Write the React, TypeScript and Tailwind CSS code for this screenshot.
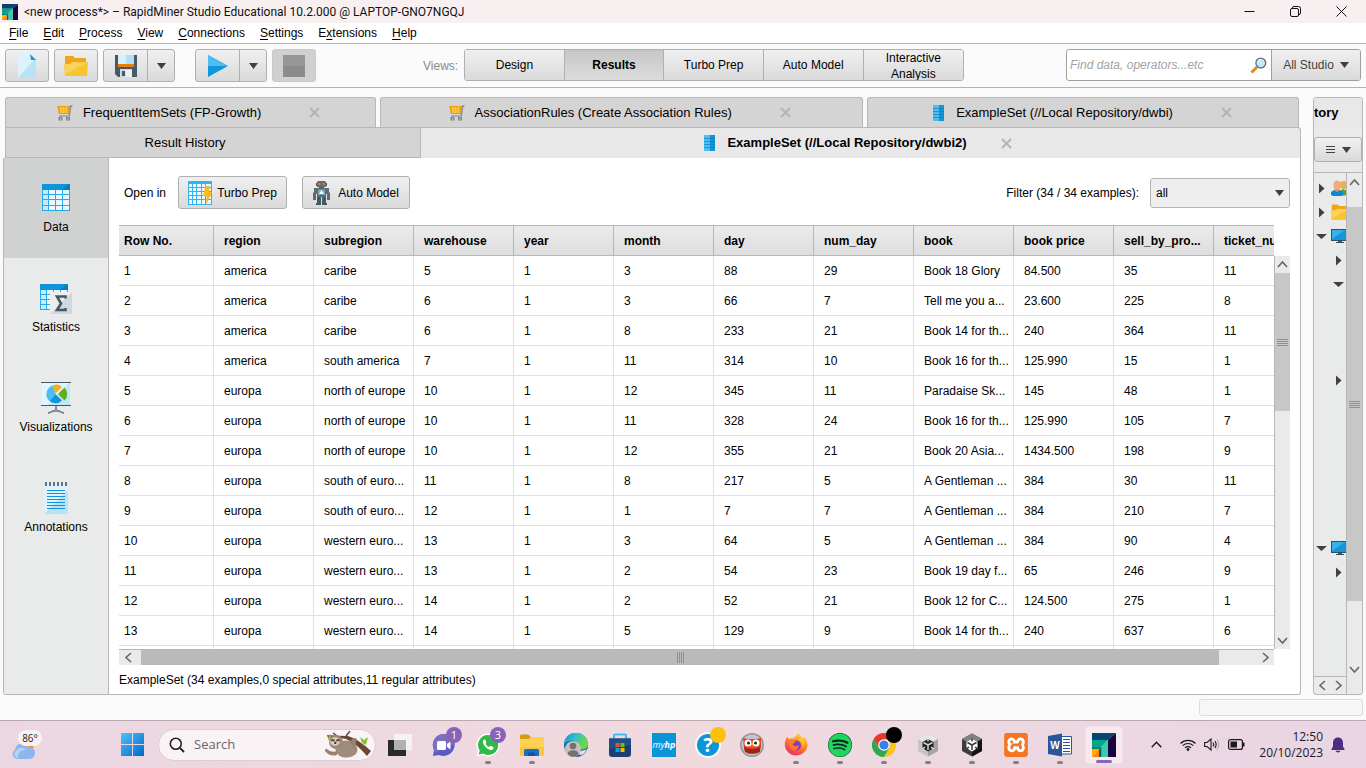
import React from "react";
import { FaWhatsapp, FaSpotify } from "react-icons/fa";
import { SiXampp } from "react-icons/si";

/* ---------- small shared pieces ---------- */

function Caret({ className = "" }: { className?: string }) {
  return (
    <svg width="9" height="6" viewBox="0 0 9 6" className={className} aria-hidden="true">
      <path d="M0 0H9L4.500 6Z" fill="#404040" />
    </svg>
  );
}

function Chevron({ dir }: { dir: "up" | "down" | "left" | "right" }) {
  const paths = {
    up: "M2 9L6.500 4L11 9",
    down: "M2 4L6.500 9L11 4",
    left: "M9 2L4 6.500L9 11",
    right: "M4 2L9 6.500L4 11",
  };
  return (
    <svg width="13" height="13" viewBox="0 0 13 13" aria-hidden="true">
      <path d={paths[dir]} fill="none" stroke="#666" strokeWidth="1.600" />
    </svg>
  );
}

function Grip({ vertical = false }: { vertical?: boolean }) {
  return (
    <svg width="11" height="11" viewBox="0 0 11 11" aria-hidden="true" className={vertical ? "rotate-90" : ""}>
      <path d="M0 2.500H11M0 4.500H11M0 6.500H11M0 8.500H11" stroke="#909090" />
    </svg>
  );
}

function CloseX({ className = "" }: { className?: string }) {
  return (
    <svg width="11" height="11" viewBox="0 0 11 11" className={className} aria-hidden="true">
      <path d="M1 1L10 10M10 1L1 10" stroke="#b3b3b3" strokeWidth="1.800" />
    </svg>
  );
}

/* ---------- application icons ---------- */

function RapidLogo({ size }: { size: number }) {
  return (
    <svg width={size} height={size} viewBox="0 0 24 24" aria-hidden="true">
      <path d="M0 0H24L16 7H0Z" fill="#06456f" />
      <path d="M24 0V24H16V7Z" fill="#16053f" />
      <path d="M0 7H16L9.500 14H0Z" fill="#00a890" />
      <path d="M16 7V24H9.500V14Z" fill="#3ccbaa" />
      <path d="M0 14H9.500L7 16.500H0Z" fill="#057b6f" />
      <path d="M9.500 14V24H7V16.500Z" fill="#04635e" />
      <path d="M0 16.500H7L0 24Z" fill="#ffb000" />
      <path d="M7 16.500V24H0Z" fill="#ff8400" />
    </svg>
  );
}

function NewFileIcon() {
  return (
    <svg width="18" height="24" viewBox="0 0 18 24" aria-hidden="true">
      <path d="M0 0H12L18 6V24H0Z" fill="#b8e2f8" />
      <path d="M0 0H12L16 6L0 24Z" fill="#dcf2fd" />
      <path d="M12 0L18 6H13Z" fill="#1296db" />
    </svg>
  );
}

function FolderIcon({ size }: { size: number }) {
  return (
    <svg width={size} height={size} viewBox="0 0 24 24" aria-hidden="true">
      <path d="M1 2H9L11 4H22V22H1Z" fill="#f2a516" />
      <path d="M0 10H6L8 8H24L23 22H1Z" fill="#f8c532" />
      <path d="M0 10H6L8 8H24L1.500 20Z" fill="#fad35b" />
    </svg>
  );
}

function SaveIcon() {
  return (
    <svg width="22" height="22" viewBox="0 0 22 22" aria-hidden="true">
      <path d="M0 0H22V22H3L0 19Z" fill="#455a64" />
      <path d="M3 0H19V9H3Z" fill="#d9f0fb" />
      <path d="M11 0H19V9H11Z" fill="#b3e0f7" />
      <path d="M3 9H19V12H3Z" fill="#e87f0c" />
      <path d="M5 14H17V22H5Z" fill="#cfd8dc" />
      <path d="M7 16H10V21H7Z" fill="#455a64" />
      <path d="M10 15H17V22H11Z" fill="#eceff1" />
    </svg>
  );
}

function PlayIcon() {
  return (
    <svg width="20" height="22" viewBox="0 0 20 22" aria-hidden="true">
      <path d="M0 0L20 11L0 22Z" fill="#1296db" />
      <path d="M0 0L20 11H0Z" fill="#4fbdf0" />
    </svg>
  );
}

function StopIcon() {
  return (
    <svg width="22" height="22" viewBox="0 0 22 22" aria-hidden="true">
      <path d="M0 0H22V22H0Z" fill="#8c8c8c" />
      <path d="M0 0H22V11H0Z" fill="#979797" />
    </svg>
  );
}

function MagnifierIcon() {
  return (
    <svg width="17" height="17" viewBox="0 0 17 17" aria-hidden="true">
      <path d="M1.500 15.500L7 10" stroke="#e8891b" strokeWidth="3" />
      <circle cx="10.800" cy="6" r="4.900" fill="#c3e8fb" stroke="#57707f" strokeWidth="1.300" />
      <path d="M7.500 6A3.500 3.500 0 0 1 11 2.500" stroke="#fff" fill="none" />
    </svg>
  );
}

function CartIcon() {
  return (
    <svg width="16" height="16" viewBox="0 0 16 16" aria-hidden="true">
      <path d="M0 1H13L12 9H2Z" fill="#efa00c" />
      <path d="M2 3H11M2.500 5H11M3 7H11M4 2V8M6.500 2V8M9 2V8" stroke="#fbdc8f" strokeWidth=".6" />
      <path d="M15.500 .8H13.700L12.300 11H2" fill="none" stroke="#78888f" strokeWidth="1.200" />
      <path d="M1.500 12H5.500V15.500H1.500ZM9 12H13V15.500H9Z" fill="#78888f" />
      <path d="M3 13.200H4.200V14.400H3ZM10.400 13.200H11.600V14.400H10.400Z" fill="#dfe4e6" />
    </svg>
  );
}

function ExampleSetIcon() {
  return (
    <svg width="16" height="16" viewBox="0 0 16 16" aria-hidden="true">
      <path d="M3 0H9V16H3Z" fill="#4fbdf0" />
      <path d="M9 0H14V16H9Z" fill="#1296db" />
      <path d="M3 3.500H9M3 6.500H9M3 9.500H9M3 12.500H9" stroke="#1a86c4" strokeWidth=".8" />
      <path d="M9 3.500H14M9 6.500H14M9 9.500H14M9 12.500H14" stroke="#0b78b6" strokeWidth=".6" />
    </svg>
  );
}

function DataIcon() {
  return (
    <svg width="32" height="32" viewBox="0 0 32 32" aria-hidden="true">
      <path d="M2 2H30V29H2Z" fill="#29a9e6" />
      <path d="M2 2H30V8H2Z" fill="#0f94d9" />
      <path d="M28 2H30V8H22Z" fill="#0a7dbf" />
      <path d="M3 8H8V12H3ZM3 13H8V17H3ZM3 18H8V23H3ZM3 24H8V28H3Z" fill="#c6eafb" />
      <path d="M9 8H15V12H9ZM16 8H22V12H16ZM23 8H29V12H23ZM9 13H15V17H9ZM16 13H22V17H16ZM23 13H29V17H23ZM9 18H15V23H9ZM16 18H22V23H16ZM23 18H29V23H23ZM9 24H15V28H9ZM16 24H22V28H16ZM23 24H29V28H23Z" fill="#e9f7fe" />
    </svg>
  );
}

function StatisticsIcon() {
  return (
    <svg width="32" height="32" viewBox="0 0 32 32" aria-hidden="true">
      <path d="M0 2H28V28H0Z" fill="#29a9e6" />
      <path d="M0 2H28V8H0Z" fill="#0f94d9" />
      <path d="M27 2H28V8H20Z" fill="#0a7dbf" />
      <path d="M1 8H6V12H1ZM1 13H6V17H1ZM1 18H6V22H1ZM1 23H6V27H1Z" fill="#c6eafb" />
      <path d="M7 8H13V12H7ZM14 8H20V12H14ZM21 8H27V12H21ZM7 13H13V17H7ZM7 18H13V22H7ZM7 23H13V27H7Z" fill="#e9f7fe" />
      <path d="M10 10H32V32H10Z" fill="#eceff0" />
      <path d="M32 10V32H10Z" fill="#cfd8dc" />
      <path d="M25.500 16.500V14.500H17L21 21.500L17 28H25.500V26" fill="none" stroke="#455a64" strokeWidth="2.600" />
    </svg>
  );
}

function VisualizationsIcon() {
  return (
    <svg width="32" height="32" viewBox="0 0 32 32" aria-hidden="true">
      <path d="M2 1H30V23H2Z" fill="#bfe6f9" />
      <path d="M2 1H29L8 23H2Z" fill="#e2f4fd" />
      <path d="M1 0H31V1H1ZM1 23H31V24H1Z" fill="#455a64" />
      <path d="M15.500 12L13 3.500A9 9 0 0 0 9.500 19Z" fill="#4fbdf0" />
      <path d="M15.500 12L9.500 19A9 9 0 0 0 22 18.500Z" fill="#1296db" />
      <path d="M15.500 11.500L13 3.200A9 9 0 0 1 22 5Z" fill="#f8ae12" />
      <path d="M18 12L24.500 5.500A9 9 0 0 1 24.500 18.500Z" fill="#61ad1f" />
      <path d="M16 24V28M8 31C11 31 11 29 16 28.500C21 29 21 31 24 31" fill="none" stroke="#78888f" strokeWidth="1.800" />
    </svg>
  );
}

function AnnotationsIcon() {
  return (
    <svg width="32" height="32" viewBox="0 0 32 32" aria-hidden="true">
      <path d="M4 2H28V32H4Z" fill="#b8e2f8" />
      <path d="M4 2H28V8L4 32Z" fill="#dcf2fd" />
      <path d="M6 0V4M10 0V4M14 0V4M18 0V4M22 0V4M26 0V4" stroke="#61737c" strokeWidth="2" />
      <path d="M7 8.500H25M7 11.500H25M7 14.500H25M7 17.500H25M7 20.500H25M7 23.500H25M7 26.500H25" stroke="#1592d4" />
    </svg>
  );
}

function TurboPrepIcon() {
  return (
    <svg width="24" height="24" viewBox="0 0 24 24" aria-hidden="true">
      <path d="M0 0H24V24H0Z" fill="#35b3ef" />
      <path d="M1 3H4V6H1ZM5 3H8V6H5ZM9 3H13V6H9ZM14 3H17V6H14ZM18 3H23V6H18Z M1 7H4V10H1ZM5 7H8V10H5ZM9 7H13V10H9ZM14 7H17V10H14ZM18 7H23V10H18Z M1 11H4V14H1ZM5 11H8V14H5ZM9 11H13V14H9ZM14 11H17V14H14ZM18 11H23V14H18Z M1 15H4V18H1ZM5 15H8V18H5ZM9 15H13V18H9ZM14 15H17V18H14ZM18 15H23V18H18Z M1 19H4V23H1ZM5 19H8V23H5ZM9 19H13V23H9ZM14 19H17V23H14ZM18 19H23V23H18Z" fill="#eaf8ff" />
      <path d="M17.500 5H22L21 11H24L18 24L18.500 15H15Z" fill="#fbbc1a" />
    </svg>
  );
}

function RobotIcon() {
  return (
    <svg width="17" height="24" viewBox="0 0 17 24" aria-hidden="true">
      <path d="M5 0H12L13 1V6H4V1Z" fill="#5b6e78" />
      <path d="M3 2H4V5H3ZM13 2H14V5H13ZM6 6H11V8H6Z" fill="#455a64" />
      <path d="M1 7H16V11L17 12V19H14V13H13V16H4V13H3V19H0V12L1 11Z" fill="#5b6e78" />
      <path d="M4 16H8V24H3V22H4ZM9 16H13V22H14V24H9Z" fill="#455a64" />
      <circle cx="6.300" cy="3" r="1.300" fill="#ef6c3a" />
      <circle cx="10.700" cy="3" r="1.300" fill="#ef6c3a" />
      <path d="M5 8.500H12V14H5Z" fill="#8fa3ad" />
      <path d="M8.500 9L11 13H6Z" fill="#fff" />
      <path d="M7 13H10V14H7Z" fill="#3aa9e0" />
    </svg>
  );
}

function MonitorIcon() {
  return (
    <svg width="18" height="16" viewBox="0 0 18 16" aria-hidden="true">
      <path d="M0 1H18V13H0Z" fill="#37505e" />
      <path d="M1 2H17V12H1Z" fill="#1296db" />
      <path d="M1 2H14L1 11Z" fill="#38b0ea" />
      <path d="M7 13H11V14H13V15H5V14H7Z" fill="#37505e" />
    </svg>
  );
}

function PeopleIcon() {
  return (
    <svg width="18" height="16" viewBox="0 0 18 16" aria-hidden="true">
      <path d="M8 16V12L12 9L18 12V15Z" fill="#5f9a2c" />
      <circle cx="12.500" cy="5" r="4" fill="#e9b04e" />
      <path d="M0 15V12L4 9.500H8L12 12V15L10 16H2Z" fill="#0f86d0" />
      <path d="M4 8H8V11L6 12L4 11Z" fill="#e2945b" />
      <ellipse cx="6" cy="5" rx="3.600" ry="4.500" fill="#f2ab79" />
    </svg>
  );
}

/* ---------- top bars ---------- */

function TitleBar() {
  return (
    <header className="flex h-[23px] shrink-0 items-center bg-[#f8eff1] pl-[2px] pr-[2px]">
      <RapidLogo size={16} />
      <h1 className="ml-[6px] flex-1 whitespace-nowrap font-['Roboto','Noto_Sans',sans-serif] text-[12px] leading-[20px] text-[#111]">
        {"<new process*> – RapidMiner Studio Educational 10.2.000 @ LAPTOP-GNO7NGQJ"}
      </h1>
      <button aria-label="Minimize" className="flex h-[20px] w-[46px] items-center justify-center">
        <svg width="11" height="11" viewBox="0 0 11 11"><path d="M.5 5.500H10.500" stroke="#111" /></svg>
      </button>
      <button aria-label="Restore" className="flex h-[20px] w-[46px] items-center justify-center">
        <svg width="11" height="11" viewBox="0 0 11 11" fill="none" stroke="#111">
          <rect x=".5" y="2.500" width="8" height="8" rx="1.500" />
          <path d="M2.500 2.500V2A1.500 1.500 0 0 1 4 .5H8.500A2 2 0 0 1 10.500 2.500V7A1.500 1.500 0 0 1 9 8.500" />
        </svg>
      </button>
      <button aria-label="Close" className="flex h-[20px] w-[46px] items-center justify-center">
        <svg width="11" height="11" viewBox="0 0 11 11"><path d="M.5 .5L10.500 10.500M10.500 .5L.5 10.500" stroke="#111" /></svg>
      </button>
    </header>
  );
}

const menus: [string, string, string][] = [
  ["", "F", "ile"],
  ["", "E", "dit"],
  ["", "P", "rocess"],
  ["", "V", "iew"],
  ["", "C", "onnections"],
  ["", "S", "ettings"],
  ["E", "x", "tensions"],
  ["", "H", "elp"],
];

function MenuBar() {
  return (
    <nav aria-label="Main menu" className="flex h-[21px] shrink-0 items-center gap-[15px] border-b border-[#b4b4b4] bg-white pl-[9px] text-black">
      {menus.map(([a, key, b]) => (
        <button key={a + key + b} className="leading-[18px]">
          {a}
          <span className="underline underline-offset-2">{key}</span>
          {b}
        </button>
      ))}
    </nav>
  );
}

function ToolButton({ label, children }: { label: string; children: React.ReactNode }) {
  return (
    <button aria-label={label} className="flex h-[33px] w-[44px] items-center justify-center rounded-[3px] border border-[#b0b0b0] bg-linear-to-b from-[#f0f0f0] to-[#dadada]">
      {children}
    </button>
  );
}

function SplitButton({ label, children }: { label: string; children: React.ReactNode }) {
  return (
    <div className="flex h-[33px] w-[72px] rounded-[3px] border border-[#b0b0b0] bg-linear-to-b from-[#f0f0f0] to-[#dadada]">
      <button aria-label={label} className="flex flex-1 items-center justify-center">
        {children}
      </button>
      <button aria-label={label + " options"} className="flex w-[27px] items-center justify-center border-l border-[#b0b0b0]">
        <Caret />
      </button>
    </div>
  );
}

const views = ["Design", "Results", "Turbo Prep", "Auto Model", "Interactive Analysis"];

function Toolbar() {
  return (
    <div className="flex h-[44px] shrink-0 items-start border-b border-[#b4b4b4] px-[5px] pt-[5px]">
      <div className="flex gap-[5px]">
        <ToolButton label="New process"><NewFileIcon /></ToolButton>
        <ToolButton label="Open process"><FolderIcon size={24} /></ToolButton>
        <SplitButton label="Save process"><SaveIcon /></SplitButton>
      </div>
      <div className="ml-5 flex gap-[5px]">
        <SplitButton label="Run process"><PlayIcon /></SplitButton>
        <button disabled aria-label="Stop process" className="flex h-[33px] w-[44px] items-center justify-center rounded-[3px] border border-[#cacaca] bg-[#d0d0d0]">
          <StopIcon />
        </button>
      </div>
      <span className="ml-[107px] mr-[6px] leading-[34px] text-[#8a8a8a]">Views:</span>
      <div className="flex h-[32px] w-[500px] overflow-hidden rounded-[3px] border border-[#b0b0b0]">
        {views.map((v, i) => (
          <button
            key={v}
            aria-pressed={i === 1}
            className={
              i === 1
                ? "w-1/5 border-r border-[#b0b0b0] bg-linear-to-b from-[#c6c6c6] to-[#dcdcdc] px-4 font-bold leading-[16px]"
                : "w-1/5 border-r border-[#b0b0b0] bg-linear-to-b from-[#f0f0f0] to-[#dadada] px-4 leading-[16px] last:border-r-0"
            }
          >
            {v}
          </button>
        ))}
      </div>
      <form role="search" className="ml-auto flex h-[32px] w-[295px] overflow-hidden rounded-[3px] border border-[#a0a0a0] bg-white">
        <input
          type="search"
          aria-label="Find data, operators"
          placeholder="Find data, operators...etc"
          className="min-w-0 flex-1 pl-[3px] text-[12px] italic outline-none placeholder:text-[#a3a3a3]"
        />
        <button type="button" aria-label="Search" className="mr-[4px] flex items-center">
          <MagnifierIcon />
        </button>
        <button type="button" className="flex w-[89px] items-center justify-center gap-[6px] border-l border-[#a0a0a0] bg-linear-to-b from-[#f0f0f0] to-[#dadada] text-[#444]">
          All Studio <Caret />
        </button>
      </form>
    </div>
  );
}

/* ---------- result tabs ---------- */

function Tab({ icon, title, grow }: { icon: React.ReactNode; title: string; grow: string }) {
  return (
    <div className={grow + " flex items-center justify-center rounded-t-[3px] border border-b-0 border-[#b7b7b7] bg-[#d4d4d4]"}>
      <button role="tab" aria-selected="false" className="flex items-center gap-[10px] whitespace-nowrap">
        {icon}
        {title}
      </button>
      <button aria-label={"Close " + title} className="ml-[48px] mr-1">
        <CloseX />
      </button>
    </div>
  );
}

function Tabs() {
  return (
    <div role="tablist" className="pl-[2px] text-[13px]">
      <div className="flex h-[30px] gap-[4px] pr-[2px]">
        <Tab grow="flex-[371]" icon={<CartIcon />} title="FrequentItemSets (FP-Growth)" />
        <Tab grow="flex-[483]" icon={<CartIcon />} title="AssociationRules (Create Association Rules)" />
        <Tab grow="flex-[432]" icon={<ExampleSetIcon />} title="ExampleSet (//Local Repository/dwbi)" />
      </div>
      <div className="flex h-[31px]">
        <button role="tab" aria-selected="false" className="flex-[415] border border-r-0 border-[#b7b7b7] bg-[#d4d4d4]">
          <span className="pr-14">Result History</span>
        </button>
        <div className="flex flex-[881] items-center justify-center rounded-tr-[3px] border border-b-0 border-[#b7b7b7] bg-[#e8e8e8]">
          <button role="tab" aria-selected="true" className="flex items-center gap-[10px] whitespace-nowrap font-bold">
            <ExampleSetIcon />
            ExampleSet (//Local Repository/dwbi2)
          </button>
          <button aria-label="Close ExampleSet" className="ml-[34px] mr-2">
            <CloseX />
          </button>
        </div>
      </div>
    </div>
  );
}

/* ---------- data view ---------- */

const sideItems = [
  { label: "Data", icon: <DataIcon /> },
  { label: "Statistics", icon: <StatisticsIcon /> },
  { label: "Visualizations", icon: <VisualizationsIcon /> },
  { label: "Annotations", icon: <AnnotationsIcon /> },
];

function SideNav() {
  return (
    <nav aria-label="Result views" className="w-[105px] shrink-0 border-r border-[#b7b7b7] bg-[#e8ebea]">
      {sideItems.map((s, i) => (
        <button
          key={s.label}
          aria-pressed={i === 0}
          className={
            i === 0
              ? "flex h-[100px] w-full flex-col items-center bg-[#d0d2d1] pt-6"
              : "flex h-[100px] w-full flex-col items-center pt-6"
          }
        >
          {s.icon}
          <span className="mt-[5px] leading-[16px]">{s.label}</span>
        </button>
      ))}
    </nav>
  );
}

const columns = ["Row No.", "region", "subregion", "warehouse", "year", "month", "day", "num_day", "book", "book price", "sell_by_pro...", "ticket_nu"];

const rows: string[][] = [
  ["1", "america", "caribe", "5", "1", "3", "88", "29", "Book 18 Glory", "84.500", "35", "11"],
  ["2", "america", "caribe", "6", "1", "3", "66", "7", "Tell me you a...", "23.600", "225", "8"],
  ["3", "america", "caribe", "6", "1", "8", "233", "21", "Book 14 for th...", "240", "364", "11"],
  ["4", "america", "south america", "7", "1", "11", "314", "10", "Book 16 for th...", "125.990", "15", "1"],
  ["5", "europa", "north of europe", "10", "1", "12", "345", "11", "Paradaise Sk...", "145", "48", "1"],
  ["6", "europa", "north of europe", "10", "1", "11", "328", "24", "Book 16 for th...", "125.990", "105", "7"],
  ["7", "europa", "north of europe", "10", "1", "12", "355", "21", "Book 20 Asia...", "1434.500", "198", "9"],
  ["8", "europa", "south of euro...", "11", "1", "8", "217", "5", "A Gentleman ...", "384", "30", "11"],
  ["9", "europa", "south of euro...", "12", "1", "1", "7", "7", "A Gentleman ...", "384", "210", "7"],
  ["10", "europa", "western euro...", "13", "1", "3", "64", "5", "A Gentleman ...", "384", "90", "4"],
  ["11", "europa", "western euro...", "13", "1", "2", "54", "23", "Book 19 day f...", "65", "246", "9"],
  ["12", "europa", "western euro...", "14", "1", "2", "52", "21", "Book 12 for C...", "124.500", "275", "1"],
  ["13", "europa", "western euro...", "14", "1", "5", "129", "9", "Book 14 for th...", "240", "637", "6"],
  ["", "", "", "", "", "", "", "", "", "", "", ""],
];

function DataTable() {
  return (
    <table className="w-full min-w-[1195px] table-fixed border-separate border-spacing-0 text-left">
      <colgroup>
        <col className="w-[95px]" />
        {columns.slice(1).map((c) => (
          <col key={c} className="w-[100px]" />
        ))}
      </colgroup>
      <thead>
        <tr>
          {columns.map((c) => (
            <th key={c} scope="col" className="h-[31px] whitespace-nowrap border-y border-r border-[#b7b7b7] bg-linear-to-b from-[#ebebeb] to-[#dedede] p-0 pl-[10px] font-bold first:pl-[5px]">
              {c}
            </th>
          ))}
        </tr>
      </thead>
      <tbody>
        {rows.map((r, i) => (
          <tr key={i}>
            {r.map((v, j) => (
              <td key={j} className="h-[30px] whitespace-nowrap border-b border-r border-[#e0e0e0] p-0 pl-[10px] first:pl-[5px]">
                {v}
              </td>
            ))}
          </tr>
        ))}
      </tbody>
    </table>
  );
}

function DataView() {
  return (
    <section className="flex min-w-0 flex-1 flex-col px-[10px] pt-[18px]">
      <div className="flex h-[33px] shrink-0 items-center pl-[5px]">
        <span className="mr-3">Open in</span>
        <button className="flex h-full w-[109px] items-center justify-center gap-[5px] rounded-[3px] border border-[#b0b0b0] bg-linear-to-b from-[#f0f0f0] to-[#dadada]">
          <TurboPrepIcon />
          Turbo Prep
        </button>
        <button className="ml-[15px] flex h-full w-[108px] items-center justify-center gap-[8px] rounded-[3px] border border-[#b0b0b0] bg-linear-to-b from-[#f0f0f0] to-[#dadada]">
          <RobotIcon />
          Auto Model
        </button>
        <label htmlFor="filter" className="ml-auto mr-[11px]">
          Filter (34 / 34 examples):
        </label>
        <div className="relative">
          <select id="filter" className="h-[30px] w-[140px] appearance-none rounded-[3px] border border-[#b4b4b4] bg-[#eeeeee] pl-[5px] outline-none">
            <option>all</option>
          </select>
          <Caret className="pointer-events-none absolute right-[6px] top-3" />
        </div>
      </div>
      <div className="mt-4 flex min-h-0 flex-1">
        <div className="min-w-0 flex-1 overflow-hidden">
          <DataTable />
        </div>
        <div className="mt-[31px] flex w-[16px] flex-col items-center border-l border-[#b7b7b7] bg-[#e8ebea]">
          <button aria-label="Scroll up" className="flex h-[17px] items-center"><Chevron dir="up" /></button>
          <div className="flex h-[138px] w-full items-center justify-center bg-[#c6c7c6]"><Grip /></div>
          <button aria-label="Scroll down" className="mt-auto flex h-[17px] items-center"><Chevron dir="down" /></button>
        </div>
      </div>
      <div className="mr-[16px] flex h-[16px] shrink-0 items-center border-t border-[#b7b7b7] bg-[#e8ebea]">
        <button aria-label="Scroll left" className="flex w-[22px] justify-center pr-1"><Chevron dir="left" /></button>
        <div className="flex h-full flex-1 items-center justify-center bg-[#bababa]"><Grip vertical /></div>
        <button aria-label="Scroll right" className="flex w-[55px] justify-end pr-[2px]"><Chevron dir="right" /></button>
      </div>
      <p className="flex h-[29px] shrink-0 items-center">ExampleSet (34 examples,0 special attributes,11 regular attributes)</p>
    </section>
  );
}

/* ---------- repository panel ---------- */

type Node = { level: number; open: boolean; icon?: React.ReactNode } | null;

const tree: Node[] = [
  { level: 0, open: false, icon: <PeopleIcon /> },
  { level: 0, open: false, icon: <FolderIcon size={18} /> },
  { level: 0, open: true, icon: <MonitorIcon /> },
  { level: 1, open: false },
  { level: 1, open: true },
  null,
  null,
  null,
  { level: 1, open: false },
  null,
  null,
  null,
  null,
  null,
  null,
  { level: 0, open: true, icon: <MonitorIcon /> },
  { level: 1, open: false },
];

function RepositoryPanel() {
  return (
    <aside className="flex w-[50px] shrink-0 flex-col overflow-hidden rounded-[3px] border border-[#b7b7b7] bg-[#e8ebea]">
      <h2 className="flex h-[30px] shrink-0 items-center bg-[#e8e8e8] text-[13px] font-bold">tory</h2>
      <button aria-label="Repository menu" className="mt-[9px] flex h-[25px] shrink-0 items-center justify-center gap-[7px] rounded-[3px] border border-[#b0b0b0] bg-linear-to-b from-[#f0f0f0] to-[#dadada]">
        <svg width="9" height="8" viewBox="0 0 9 8" aria-hidden="true"><path d="M0 .5H9M0 3.500H9M0 6.500H9" stroke="#404040" /></svg>
        <Caret />
      </button>
      <div className="mt-[10px] flex min-h-0 flex-1 border-t border-[#b7b7b7]">
        <div className="flex min-w-0 flex-1 flex-col">
          <ul className="min-h-0 flex-1 overflow-hidden border-b border-[#b7b7b7] pt-[3px]">
            {tree.map((n, i) => (
              <li key={i} className={n && n.level === 1 ? "flex h-6 items-center pl-[19px]" : "flex h-6 items-center pl-[2px]"}>
                {n && (
                  <svg width="11" height="11" viewBox="0 0 11 11" className="mr-[4px] shrink-0" aria-hidden="true">
                    <path d={n.open ? "M0 3H11L5.500 8Z" : "M3 .5V10.500L8.500 5.500Z"} fill="#404040" />
                  </svg>
                )}
                {n && n.icon && <span className="shrink-0">{n.icon}</span>}
              </li>
            ))}
          </ul>
          <div className="flex h-[17px] shrink-0 items-center gap-[3px] pl-[2px]">
            <Chevron dir="left" />
            <Chevron dir="right" />
          </div>
        </div>
        <div className="flex w-[16px] flex-col items-center border-l border-[#b7b7b7] pb-[18px]">
          <div className="flex h-[34px] pt-[3px]"><Chevron dir="up" /></div>
          <div className="flex w-full flex-1 items-center justify-center bg-[#c6c7c6]"><Grip /></div>
          <div className="flex h-[75px] items-end"><Chevron dir="down" /></div>
        </div>
      </div>
    </aside>
  );
}

/* ---------- desktop taskbar ---------- */

function StoreIcon() {
  return (
    <svg width="24" height="24" viewBox="0 0 24 24" aria-hidden="true">
      <path d="M6 6V2.500Q6 1.500 7 1.500H17Q18 1.500 18 2.500V6" fill="none" stroke="#35bff5" strokeWidth="2" />
      <path d="M1 5.500H23V21Q23 24 20 24H4Q1 24 1 21Z" fill="#1c3f72" />
      <path d="M1 5.500H23V12L1 16Z" fill="#1f4f88" />
      <path d="M7.500 10H11.500V14H7.500Z" fill="#f25022" />
      <path d="M12.500 10H16.500V14H12.500Z" fill="#7fba00" />
      <path d="M7.500 15H11.500V19H7.500Z" fill="#00a4ef" />
      <path d="M12.500 15H16.500V19H12.500Z" fill="#ffb900" />
    </svg>
  );
}

function EdgeIcon() {
  return (
    <svg width="24" height="24" viewBox="0 0 24 24" aria-hidden="true">
      <defs>
        <linearGradient id="edge" x1="0" y1="0" x2="1" y2=".4">
          <stop offset="0" stopColor="#1a90dc" />
          <stop offset=".5" stopColor="#2cc3cf" />
          <stop offset="1" stopColor="#6fd93b" />
        </linearGradient>
      </defs>
      <circle cx="12" cy="12" r="12" fill="#0f5ba8" />
      <path d="M0 12A12 12 0 0 1 24 11C24 15 21 16.500 18 16.500Q13 16 14 13Q12 6 5 8Q1 9 0 12Z" fill="url(#edge)" />
      <path d="M14 17Q18 19 23 16Q21 21 16 22.500Z" fill="#f1dade" />
      <circle cx="9" cy="16" r="8" fill="#c4c1bf" />
      <circle cx="9" cy="13" r="3.300" fill="#77716e" />
      <path d="M3.500 21Q4 17.300 9 17.300T14.500 21Q12 24 9 24T3.500 21Z" fill="#77716e" />
    </svg>
  );
}

function FirefoxIcon() {
  return (
    <svg width="24" height="24" viewBox="0 0 24 24" aria-hidden="true">
      <defs>
        <linearGradient id="fox" x1=".8" y1="0" x2=".3" y2="1">
          <stop offset="0" stopColor="#ffe03a" />
          <stop offset=".45" stopColor="#ff8a1e" />
          <stop offset="1" stopColor="#f0266f" />
        </linearGradient>
      </defs>
      <path d="M14.500 0Q16 3 19 5.500Q20 4.500 19.800 3.500Q24 8 23.500 13.500A11.500 11 0 0 1 1 14Q0 9 3 3.500L5 6Q7 4.700 9 5.500Q12 4 14.500 0Z" fill="url(#fox)" />
      <circle cx="12" cy="12.500" r="5" fill="#7b3bd4" />
      <path d="M5 8Q9 6 12 9Q9 10 8.500 11.500Q11 14.500 15 12Q14 17 10.500 17.500Q5 17 5 8Z" fill="#ff7a24" />
      <path d="M14 6Q20 9 18.500 15Q22 10 18 5Z" fill="#ffcb2e" />
    </svg>
  );
}

function ChromeIcon() {
  return (
    <svg width="24" height="24" viewBox="0 0 24 24" aria-hidden="true">
      <path d="M22.400 6A12 12 0 0 1 12 24L17.200 15L15 6Z" fill="#fcc31e" />
      <path d="M1.600 6L6.800 15L12 12V6.500H22.600L22.400 6A12 12 0 0 0 1.600 6Z" fill="#e33b2e" />
      <path d="M1.600 6A12 12 0 0 0 12 24L17.200 15H6.800Z" fill="#2da94f" />
      <circle cx="12" cy="12" r="5.800" fill="#fff" />
      <circle cx="12" cy="12" r="4.600" fill="#3b7ded" />
    </svg>
  );
}

function OwlIcon() {
  return (
    <svg width="24" height="24" viewBox="0 0 24 24" aria-hidden="true">
      <circle cx="12" cy="12" r="12" fill="#8e969c" />
      <circle cx="12" cy="12" r="10.500" fill="#c0c6ca" />
      <path d="M3 5L8 6H16L21 5V15Q19 21 12 21T4 15Z" fill="#e8451f" />
      <path d="M4 14Q12 18 20 14V19Q12 22 5 19Z" fill="#a3221a" />
      <circle cx="8" cy="10" r="3.500" fill="#fff" />
      <circle cx="16" cy="10" r="3.500" fill="#fff" />
      <circle cx="8.500" cy="10" r="1.500" fill="#222" />
      <circle cx="15.500" cy="10" r="1.500" fill="#222" />
      <path d="M11 11H13L12 15Z" fill="#f8a71b" />
    </svg>
  );
}

function ChatIcon() {
  return (
    <svg width="24" height="24" viewBox="0 0 24 24" aria-hidden="true">
      <path d="M12 1A11 11 0 1 1 7 22L1 23L2 17A11 11 0 0 1 12 1Z" fill="#5b5bc8" />
      <path d="M12 1A11 11 0 0 0 2 17L4 20Q12 10 23 12A11 11 0 0 0 12 1Z" fill="#7a6fc0" />
      <rect x="5" y="8" width="9" height="9" rx="1.500" fill="#fff" />
      <path d="M15 11L18.500 8.500V16.500L15 14Z" fill="#fff" />
    </svg>
  );
}

function TaskViewIcon() {
  return (
    <svg width="24" height="24" viewBox="0 0 24 24" aria-hidden="true">
      <path d="M0 7H18V23H0Z" fill="#2a2a2a" />
      <path d="M6 1H24V17H6Z" fill="#f4f2f3" />
      <path d="M6 7H18V17H6Z" fill="#b1b1b1" />
    </svg>
  );
}

function ExplorerIcon() {
  return (
    <svg width="24" height="24" viewBox="0 0 24 24" aria-hidden="true">
      <path d="M0 3Q0 1.500 1.500 1.500H8L11 4V8H0Z" fill="#d89a10" />
      <path d="M0 6H8.500L11 4H24V22.500H0Z" fill="#ffd257" />
      <path d="M0 14H24V22.500H0Z" fill="#fbc53c" />
      <path d="M4 23V17.500Q4 16 5.500 16H17.500Q19 16 19 17.500V23Z" fill="#1371c8" />
      <path d="M8 20.500Q8 19.500 9 19.500H14Q15 19.500 15 20.500V23H8Z" fill="#0c57a0" />
    </svg>
  );
}

function HelpIcon() {
  return (
    <span className="flex size-[22px] items-center justify-center rounded-full bg-[#0b96d6] font-['Open_Sans',sans-serif] text-[20px] font-bold leading-[22px] text-white ring-2 ring-white/80">?</span>
  );
}

function UnityTile({ dark }: { dark: boolean }) {
  return (
    <svg width="24" height="24" viewBox="0 0 24 24" aria-hidden="true">
      <path d="M12 .5L22 6V18L12 23.500L2 18V6Z" fill={dark ? "#3c3c3c" : "#c4c4c4"} />
      <path d="M12 .5L22 6L12 12L2 6Z" fill={dark ? "#828282" : "#e6e6e6"} />
      <path d="M22 6V18L12 23.500V12Z" fill={dark ? "#141414" : "#a4a4a4"} />
      <path d="M12 6L17.500 9V15L12 18.500L6.500 15V9Z" fill={dark ? "#ffffff" : "#222222"} />
      <path
        d="M12 12V17M12 12L7.500 9.500M12 12L16.500 9.500M12 5.500V8.500M6 16L9 14.200M18 16L15 14.200"
        fill="none"
        stroke={dark ? "#3a3a3a" : "#d0d0d0"}
        strokeWidth="1.500"
      />
    </svg>
  );
}

function WordIcon() {
  return (
    <svg width="24" height="24" viewBox="0 0 24 24" aria-hidden="true">
      <path d="M13 3.500H23.500V21H13Z" fill="#fff" stroke="#2b579a" />
      <path d="M15 6.500H22M15 9.500H22M15 12.500H22M15 15.500H22M15 18.500H22" stroke="#2b579a" />
      <path d="M0 3L14 .5V23.500L0 21Z" fill="#2b579a" />
      <text x="7" y="16" textAnchor="middle" fontFamily="Liberation Sans" fontWeight="700" fontSize="10" fill="#fff">W</text>
    </svg>
  );
}

function SlothIcon() {
  return (
    <svg width="48" height="28" viewBox="0 0 48 28" aria-hidden="true">
      <path d="M3 4Q14 5 24 5Q34 8 47 20L43 25Q32 12 22 8Q12 6 4 7Z" fill="#6b4630" />
      <path d="M22 5L26 0M13 5L9 2" stroke="#6b4630" strokeWidth="1.500" />
      <path d="M5 3L9 8L4 9ZM38 12L36 6L40 9L44 6L42 14Z" fill="#8bbf3a" />
      <path d="M11 14Q20 7 29 11Q36 17 32 23Q26 28 18 26Q11 24 11 14Z" fill="#a08c7c" />
      <path d="M26 12Q28 5 33 8Q31 13 32 20ZM13 24Q6 26 1 20Q1 17 3 18Q7 22 13 20Z" fill="#97816f" />
      <circle cx="12" cy="11" r="7" fill="#9c8878" />
      <ellipse cx="11" cy="10.500" rx="4.800" ry="4.300" fill="#d9cbbb" />
      <path d="M7 10Q9 7.500 10.500 10.500M12.500 10.500Q14 7.500 15.500 10" stroke="#5b4636" strokeWidth="1.600" fill="none" />
      <circle cx="11.300" cy="12" r="1.100" fill="#33251d" />
    </svg>
  );
}

type Task = { name: string; icon: React.ReactNode; badge?: string; badgeClass?: string; running?: boolean };

const tasks: Task[] = [
  { name: "Task view", icon: <TaskViewIcon /> },
  { name: "Chat", icon: <ChatIcon />, badge: "1", badgeClass: "bg-[#8764b8]" },
  {
    name: "WhatsApp",
    icon: (
      <svg width="24" height="24" viewBox="0 0 24 24" aria-hidden="true">
        <path d="M12 .5A11.500 11.500 0 1 1 6.500 22L.5 23.500L2 17.800A11.500 11.500 0 0 1 12 .5Z" fill="#fff" />
        <path d="M12 2A10 10 0 1 1 7 20.500L2.600 21.500L3.700 17.500A10 10 0 0 1 12 2Z" fill="#2fbb46" />
        <g transform="translate(3.500 3.500)">
          <FaWhatsapp size={17} color="#2fbb46" />
        </g>
        <path d="M8.300 6.500C7 7 6.600 8.400 7 9.800C8 13.200 11 16 14.200 17C15.800 17.400 17.200 16.600 17.500 15C17.600 14.500 17.500 14.200 17.200 14L14.900 12.900C14.500 12.700 14.300 12.800 14 13.100L13.200 14.100C11.500 13.500 10.200 12.200 9.500 10.700L10.200 9.800C10.400 9.500 10.400 9.300 10.300 9L9.300 6.800C9.100 6.400 8.700 6.400 8.300 6.500Z" fill="#fff" />
      </svg>
    ),
    badge: "3",
    badgeClass: "bg-[#8764b8]",
    running: true,
  },
  { name: "File Explorer", icon: <ExplorerIcon />, running: true },
  { name: "Edge", icon: <EdgeIcon /> },
  { name: "Microsoft Store", icon: <StoreIcon /> },
  {
    name: "myHP",
    icon: (
      <span className="flex size-6 items-center justify-center bg-[#0a96d6] text-[9px] italic leading-[24px] text-white">
        my<b>hp</b>
      </span>
    ),
  },
  { name: "HP Support", icon: <HelpIcon />, badge: " ", badgeClass: "bg-[#fcc00d]" },
  { name: "Owl", icon: <OwlIcon /> },
  { name: "Firefox", icon: <FirefoxIcon />, running: true },
  {
    name: "Spotify",
    icon: (
      <span className="flex size-6 items-center justify-center rounded-full bg-[#10231a]">
        <FaSpotify size={24} color="#1ed760" />
      </span>
    ),
    running: true,
  },
  { name: "Chrome", icon: <ChromeIcon />, badge: " ", badgeClass: "bg-black", running: true },
  { name: "Unity Hub", icon: <UnityTile dark={false} />, running: true },
  { name: "Unity", icon: <UnityTile dark />, running: true },
  {
    name: "XAMPP",
    icon: (
      <span className="flex size-6 items-center justify-center rounded-[3px] bg-white">
        <SiXampp size={24} color="#f37623" />
      </span>
    ),
    running: true,
  },
  { name: "Word", icon: <WordIcon />, running: true },
];

function Taskbar() {
  return (
    <footer className="flex h-[48px] shrink-0 items-center border-t border-[#bba9b1] bg-linear-to-r from-[#ebd6e2] via-[#f1dade] to-[#e9d5e4] font-['Open_Sans','Noto_Sans',sans-serif] text-[12px] text-[#1b1b1b]">
      <button aria-label="Weather" className="relative ml-[10px] mr-[68px] h-[30px] w-8">
        <svg width="26" height="18" viewBox="0 0 26 18" className="absolute bottom-0 left-0" aria-hidden="true">
          <circle cx="19" cy="4" r="4.500" fill="#f08a3c" />
          <path d="M6 17A5 5 0 0 1 5 8A7 7 0 0 1 18 5A6 6 0 0 1 20 17Z" fill="#8db5ee" />
          <path d="M7 16A4 4 0 0 1 6 9A6 6 0 0 1 16 8A7 7 0 0 0 8 16Z" fill="#b7d2f7" />
        </svg>
        <span className="absolute right-0 top-0 flex h-[16px] w-[24px] items-center justify-center rounded-full bg-[#f7f1f4] text-[10px] leading-[16px]">86°</span>
      </button>
      <button aria-label="Start" className="flex w-[44px] justify-center">
        <svg width="23" height="23" viewBox="0 0 23 23" aria-hidden="true">
          <defs>
            <linearGradient id="win" x1="0" y1="0" x2="1" y2="1">
              <stop offset="0" stopColor="#4cc4fb" />
              <stop offset="1" stopColor="#0067c8" />
            </linearGradient>
          </defs>
          <path d="M0 0H11V11H0ZM12 0H23V11H12ZM0 12H11V23H0ZM12 12H23V23H12Z" fill="url(#win)" />
        </svg>
      </button>
      <label className="ml-[4px] mr-[2px] flex h-[32px] w-[218px] items-center rounded-full border border-[#dccdd4] bg-[#faf3f6] pl-[10px] pr-[3px]">
        <svg width="16" height="16" viewBox="0 0 16 16" aria-hidden="true">
          <circle cx="6.800" cy="6.800" r="5.500" fill="none" stroke="#222" strokeWidth="1.600" />
          <path d="M11 11L15 15" stroke="#222" strokeWidth="1.800" />
        </svg>
        <input aria-label="Search" placeholder="Search" className="ml-[9px] min-w-0 flex-1 bg-transparent text-[13px] outline-none placeholder:text-[#6a6467]" />
        <SlothIcon />
      </label>
      {tasks.map((t) => (
        <button key={t.name} aria-label={t.name} className="relative flex h-[47px] w-[44px] items-center justify-center">
          {t.icon}
          {t.badge && (
            <span className={t.badgeClass + " absolute left-[24px] top-[6px] flex size-4 items-center justify-center rounded-full text-[11px] leading-[16px] text-white"}>
              {t.badge}
            </span>
          )}
          {t.running && <span className="absolute bottom-[4px] left-[19px] h-[3px] w-[6px] rounded-full bg-[#877f84]" />}
        </button>
      ))}
      <button aria-label="RapidMiner Studio" className="relative ml-[3px] flex h-[38px] w-[38px] items-center justify-center rounded-[4px] border border-[#eee2e8] bg-[#f6eaef]">
        <RapidLogo size={24} />
        <span className="absolute bottom-0 left-[10px] h-[3px] w-[16px] rounded-full bg-[#8764b8]" />
      </button>
      <div className="ml-auto flex items-center pr-[21px]">
        <svg width="11" height="7" viewBox="0 0 11 7" aria-hidden="true"><path d="M.7 6.300L5.500 1.300L10.300 6.300" fill="none" stroke="#1b1b1b" strokeWidth="1.400" /></svg>
        <svg width="16" height="12" viewBox="0 0 16 12" className="ml-[18px]" aria-hidden="true">
          <path d="M.5 4.500A10.500 10.500 0 0 1 15.500 4.500M2.800 6.700A7.300 7.300 0 0 1 13.200 6.700M5 8.800A4.200 4.200 0 0 1 11 8.800" fill="none" stroke="#1b1b1b" strokeWidth="1.200" />
          <circle cx="8" cy="10.500" r="1.400" fill="#1b1b1b" />
        </svg>
        <svg width="16" height="13" viewBox="0 0 16 13" className="ml-[8px]" aria-hidden="true">
          <path d="M.6 4.500H3L7 1V12L3 8.500H.6Z" fill="none" stroke="#1b1b1b" strokeWidth="1.100" />
          <path d="M9 4.500Q10.500 6.500 9 8.500M11 3Q13.300 6.500 11 10" fill="none" stroke="#1b1b1b" strokeWidth="1.100" />
          <path d="M13 1.500Q16.500 6.500 13 11.500" fill="none" stroke="#b9aab2" strokeWidth="1.100" />
        </svg>
        <svg width="17" height="11" viewBox="0 0 17 11" className="ml-[8px]" aria-hidden="true">
          <rect x=".6" y=".6" width="13.800" height="9.800" rx="2" fill="none" stroke="#1b1b1b" strokeWidth="1.200" />
          <path d="M2.500 2.500H9V8.500H2.500ZM15 3.500H16.500V7.500H15Z" fill="#1b1b1b" />
        </svg>
        <div className="ml-[14px] text-right text-[12px] leading-[16px]">
          <div>12:50</div>
          <div>20/10/2023</div>
        </div>
        <svg width="14" height="16" viewBox="0 0 14 16" className="ml-[8px]" aria-hidden="true">
          <path d="M7 .5C3.500 .5 2 3 2 6V9.500L.5 12V13H13.500V12L12 9.500V6C12 3 10.500 .5 7 .5Z" fill="#4b2e83" />
          <path d="M4.500 13.800H9.500Q9 15.500 7 15.500T4.500 13.800Z" fill="#4b2e83" />
        </svg>
      </div>
    </footer>
  );
}

/* ---------- page ---------- */

export default function App() {
  return (
    <div className="flex h-screen flex-col overflow-hidden bg-[#fafafa] font-['Liberation_Sans',Arial,sans-serif] text-[12px] text-black">
      <TitleBar />
      <MenuBar />
      <Toolbar />
      <main className="flex min-h-0 flex-1 gap-[12px] px-[3px] pt-[9px]">
        <div className="flex min-w-0 flex-1 flex-col">
          <Tabs />
          <div className="flex min-h-0 flex-1 overflow-hidden rounded-b-[3px] border border-t-0 border-[#b7b7b7] bg-white">
            <SideNav />
            <DataView />
          </div>
        </div>
        <RepositoryPanel />
      </main>
      <div className="flex shrink-0 justify-end px-[3px] py-1">
        <div role="status" className="h-[17px] w-[164px] rounded-[3px] border border-[#dcdcdc] bg-[#f6f6f6]" />
      </div>
      <Taskbar />
    </div>
  );
}
